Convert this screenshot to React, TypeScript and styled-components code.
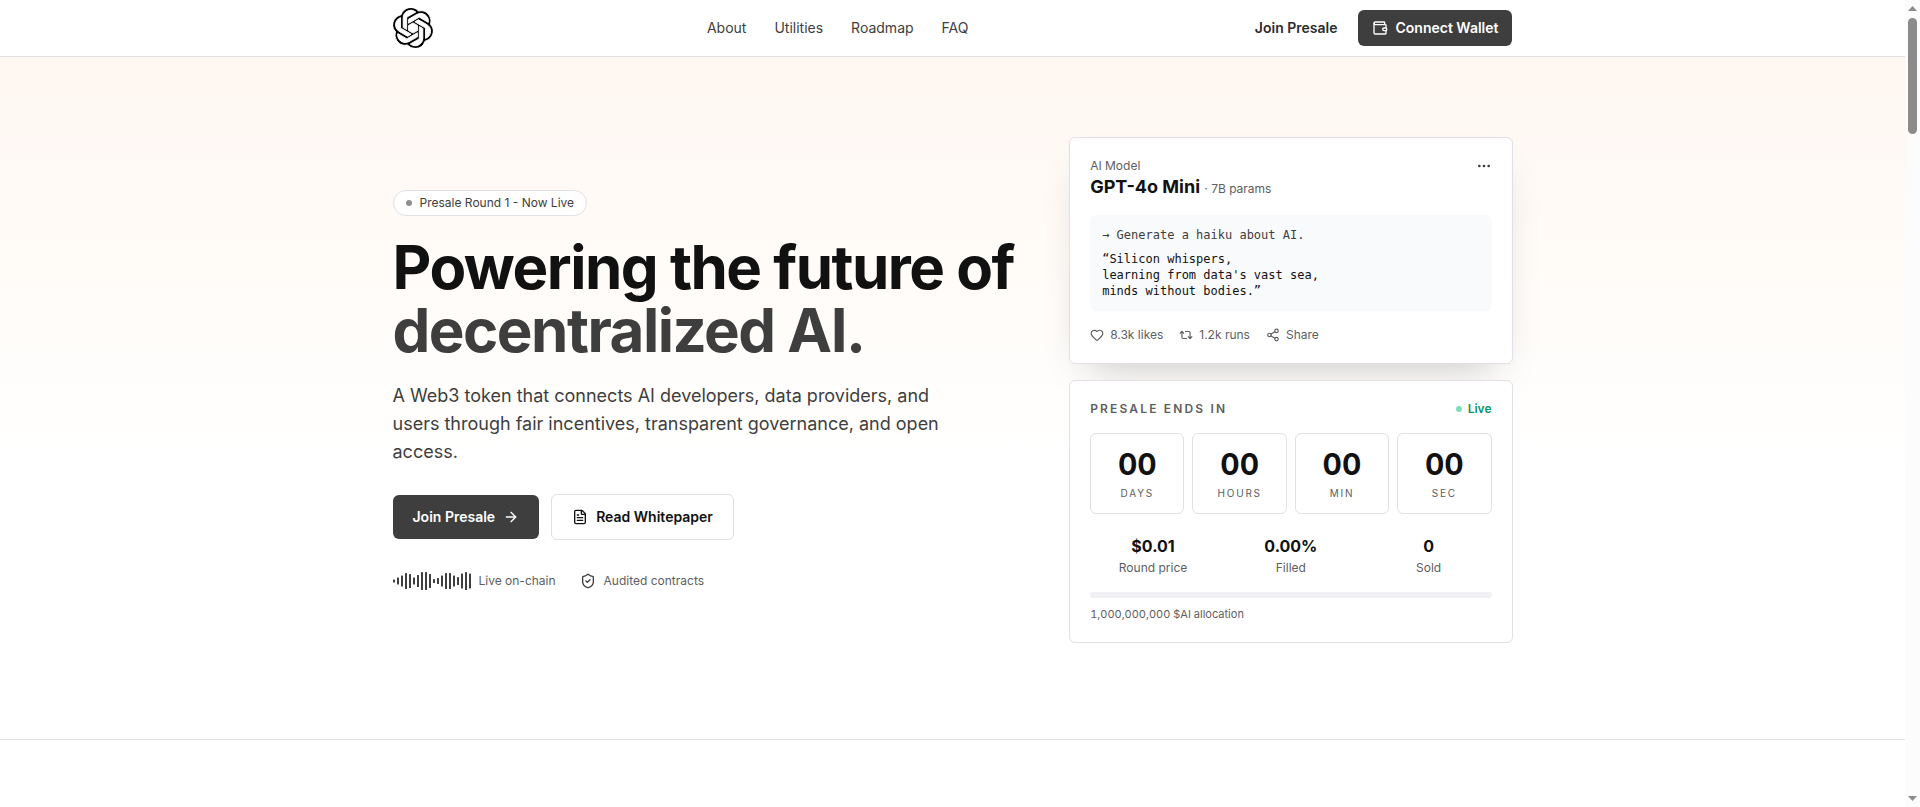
import React from 'react';
import styled, { createGlobalStyle } from 'styled-components';
import { ArrowRight, FileText, Heart, MoreHorizontal, Repeat2, Share2, ShieldCheck, Wallet } from 'lucide-react';
import { SiOpenai } from 'react-icons/si';

const GlobalStyle = createGlobalStyle`
  *, *::before, *::after { box-sizing: border-box; }
  body {
    margin: 0;
    background: #fff;
    color: #111;
    font-family: Inter, "Liberation Sans", sans-serif;
    font-size: 16px;
    line-height: 24px;
  }
  h1, h2, p, dl, dd, dt { margin: 0; }
  button { font: inherit; color: inherit; cursor: pointer; }
  a { color: inherit; text-decoration: none; }
  svg { display: block; flex-shrink: 0; }
`;

const Page = styled.div`
  height: 100vh;
  overflow: hidden;
  padding-right: 15px;
`;

const Container = styled.div`
  width: 100%;
  max-width: 1120px;
  margin: 0 auto;
`;

const Header = styled.header`
  border-bottom: 1px solid #e0e0e6;
  background: #fff;
`;

const HeaderRow = styled(Container)`
  display: flex;
  align-items: center;
  justify-content: space-between;
  height: 56px;
`;

const Nav = styled.nav`
  display: flex;
  gap: 28px;
  font-size: 14px;
  line-height: 20px;
  color: #3e3e3e;
`;

const HeaderActions = styled.div`
  display: flex;
  align-items: center;
  gap: 8px;
  font-size: 14px;
  line-height: 20px;
  font-weight: 600;
`;

const TextLink = styled.a`
  padding: 8px 12px;
  color: #2c2c2c;
`;

const WalletButton = styled.button`
  display: flex;
  align-items: center;
  gap: 8px;
  height: 36px;
  padding: 0 14px;
  border: 0;
  border-radius: 6px;
  background: #3e3e3e;
  color: #fff;
`;

const Hero = styled.section`
  padding: 80px 0 96px;
  border-bottom: 1px solid #e0e0e0;
  background: linear-gradient(to bottom, #fff7f1, #fffcf9 35%, #fff 60%);
`;

const HeroGrid = styled(Container)`
  display: grid;
  grid-template-columns: repeat(12, minmax(0, 1fr));
  column-gap: 40px;
  align-items: center;
`;

const Intro = styled.div`
  grid-column: span 7;
`;

const Badge = styled.span`
  display: flex;
  width: fit-content;
  align-items: center;
  gap: 8px;
  padding: 4px 12px;
  border: 1px solid #e0e0e6;
  border-radius: 13px;
  background: #fff;
  color: #3e3e3e;
  font-size: 12px;
  line-height: 16px;
`;

const Dot = styled.i<{ $color: string }>`
  width: 6px;
  height: 6px;
  border-radius: 50%;
  background: ${(p) => p.$color};
`;

const Title = styled.h1`
  margin-top: 20px;
  font-size: 60px;
  line-height: 63px;
  font-weight: 700;
  letter-spacing: -0.025em;
  color: #111;
`;

const TitleAccent = styled.span`
  display: block;
  color: #3e3e3e;
`;

const Lead = styled.p`
  max-width: 576px;
  margin-top: 20px;
  font-size: 18px;
  line-height: 28px;
  color: #3e3e3e;
`;

const CtaRow = styled.div`
  display: flex;
  align-items: center;
  gap: 12px;
  margin-top: 28px;
`;

const Cta = styled.a<{ $outlined?: boolean }>`
  display: flex;
  align-items: center;
  gap: 8px;
  padding: 12px 20px;
  border: ${(p) => (p.$outlined ? '1px solid #e0e0e0' : '0')};
  border-radius: 6px;
  background: ${(p) => (p.$outlined ? '#fff' : '#3e3e3e')};
  color: ${(p) => (p.$outlined ? '#111' : '#fff')};
  font-size: 14px;
  line-height: 20px;
  font-weight: 600;
`;

const TrustRow = styled.div`
  display: flex;
  align-items: center;
  gap: 24px;
  margin-top: 32px;
  font-size: 12px;
  line-height: 18px;
  color: #5d5e62;
`;

const TrustItem = styled.span`
  display: flex;
  align-items: center;
  gap: 8px;
`;

const Cards = styled.div`
  grid-column: span 5;
  display: grid;
  gap: 16px;
`;

const Card = styled.article<{ $raised?: boolean }>`
  padding: 20px;
  border: 1px solid #e0e0e6;
  border-radius: 6px;
  background: #fff;
  box-shadow: ${(p) => (p.$raised ? '0 20px 40px -20px rgba(0, 0, 0, 0.25)' : 'none')};
`;

const CardHead = styled.div`
  display: flex;
  align-items: flex-start;
  justify-content: space-between;
  margin-bottom: 16px;
  font-size: 12px;
  line-height: 16px;
  color: #5d5e62;
`;

const ModelName = styled.h2`
  font-size: 18px;
  line-height: 25px;
  font-weight: 700;
  color: #111;
`;

const ModelMeta = styled.small`
  font-size: 12px;
  line-height: 16px;
  font-weight: 400;
  color: #5d5e62;
`;

const IconButton = styled.button`
  display: block;
  padding: 0;
  border: 0;
  background: none;
`;

const Prompt = styled.div`
  display: grid;
  gap: 8px;
  padding: 12px;
  border-radius: 6px;
  background: #f9fafc;
  color: #3e3e3e;
  font-family: "DejaVu Sans Mono", monospace;
  font-size: 12px;
  line-height: 16px;
`;

const Answer = styled.p`
  color: #111;
  white-space: pre-line;
`;

const ActionRow = styled.div`
  display: flex;
  gap: 16px;
  margin-top: 16px;
  font-size: 12px;
  line-height: 16px;
  color: #5d5e62;
`;

const Action = styled(IconButton)`
  display: flex;
  align-items: center;
  gap: 6px;
`;

const SectionLabel = styled.h2`
  font-size: 12px;
  line-height: 16px;
  font-weight: 600;
  letter-spacing: 0.18em;
  text-transform: uppercase;
`;

const LiveTag = styled.span`
  display: flex;
  align-items: center;
  gap: 6px;
  font-weight: 600;
  color: #059669;
`;

const Countdown = styled.div`
  display: grid;
  grid-template-columns: repeat(4, 1fr);
  gap: 8px;
`;

const TimeCell = styled.div`
  padding: 12px;
  border: 1px solid #e0e0e6;
  border-radius: 6px;
  text-align: center;
`;

const TimeValue = styled.div`
  font-size: 30px;
  line-height: 36px;
  font-weight: 700;
  font-variant-numeric: tabular-nums;
`;

const TimeUnit = styled.div`
  margin-top: 4px;
  font-size: 10px;
  line-height: 15px;
  letter-spacing: 0.18em;
  text-transform: uppercase;
  color: #5d5e62;
`;

const Stats = styled.dl`
  display: grid;
  grid-template-columns: repeat(3, 1fr);
  gap: 12px;
  margin-top: 20px;
  text-align: center;
`;

const Stat = styled.div`
  display: flex;
  flex-direction: column-reverse;
  gap: 2px;
`;

const StatLabel = styled.dt`
  font-size: 12px;
  line-height: 16px;
  color: #5d5e62;
`;

const StatValue = styled.dd`
  font-weight: 700;
`;

const Progress = styled.div`
  height: 6px;
  margin-top: 16px;
  border-radius: 3px;
  background: #f0f0f5;
`;

const Allocation = styled.p`
  margin-top: 8px;
  font-size: 11px;
  line-height: 16px;
  font-variant-numeric: tabular-nums;
  color: #5d5e62;
`;

const ScrollTrack = styled.div`
  position: fixed;
  top: 0;
  right: 0;
  bottom: 0;
  display: flex;
  flex-direction: column;
  align-items: center;
  justify-content: space-between;
  width: 15px;
  padding: 6px 0;
  background: #fcfcfc;
`;

const ScrollTop = styled.div`
  display: grid;
  justify-items: center;
  gap: 7px;
`;

const ScrollThumb = styled.div`
  width: 9px;
  height: 116px;
  border-radius: 5px;
  background: #8b8b8b;
`;

const WAVE = [3, 7, 11, 16, 14, 7, 12, 18, 18, 14, 4, 6, 11, 16, 16, 11, 8, 15, 18, 15];

const Waveform = () => (
  <svg width="78" height="18" viewBox="0 0 78 18" aria-hidden="true">
    {WAVE.map((h, i) => (
      <rect key={i} x={i * 4} y={(18 - h) / 2} width="2" height={h} rx="0.5" fill="#3e3e3e" />
    ))}
  </svg>
);

const LINKS = ['About', 'Utilities', 'Roadmap', 'FAQ'];
const UNITS = ['Days', 'Hours', 'Min', 'Sec'];
const STATS = [
  { label: 'Round price', value: '$0.01' },
  { label: 'Filled', value: '0.00%' },
  { label: 'Sold', value: '0' },
];

export default function App() {
  return (
    <>
      <GlobalStyle />
      <Page>
        <Header>
          <HeaderRow>
            <a href="#top" aria-label="Home">
              {/* The white outline thins the mark's strokes */}
              <SiOpenai size={40} color="#000" stroke="#fff" strokeWidth="0.56" viewBox="0.28 0.28 23.44 23.44" />
            </a>
            <Nav>
              {LINKS.map((l) => (
                <a key={l} href={`#${l.toLowerCase()}`}>{l}</a>
              ))}
            </Nav>
            <HeaderActions>
              <TextLink href="#presale">Join Presale</TextLink>
              <WalletButton type="button">
                <Wallet size={16} />
                Connect Wallet
              </WalletButton>
            </HeaderActions>
          </HeaderRow>
        </Header>
        <Hero>
          <HeroGrid>
            <Intro>
              <Badge>
                <Dot $color="#8f8f8f" />
                Presale Round 1 - Now Live
              </Badge>
              <Title>
                Powering the future of <TitleAccent>decentralized AI.</TitleAccent>
              </Title>
              <Lead>
                A Web3 token that connects AI developers, data providers, and users through fair
                incentives, transparent governance, and open access.
              </Lead>
              <CtaRow>
                <Cta href="#presale">
                  Join Presale
                  <ArrowRight size={16} />
                </Cta>
                <Cta href="#whitepaper" $outlined>
                  <FileText size={16} />
                  Read Whitepaper
                </Cta>
              </CtaRow>
              <TrustRow>
                <TrustItem>
                  <Waveform />
                  Live on-chain
                </TrustItem>
                <TrustItem>
                  <ShieldCheck size={16} color="#3e3e3e" />
                  Audited contracts
                </TrustItem>
              </TrustRow>
            </Intro>
            <Cards>
              <Card $raised>
                <CardHead>
                  <div>
                    <div>AI Model</div>
                    <ModelName>
                      GPT-4o Mini <ModelMeta>· 7B params</ModelMeta>
                    </ModelName>
                  </div>
                  <IconButton type="button" aria-label="More options">
                    <MoreHorizontal size={16} color="#3e3e3e" />
                  </IconButton>
                </CardHead>
                <Prompt>
                  <p>→ Generate a haiku about AI.</p>
                  <Answer>{"“Silicon whispers,\nlearning from data's vast sea,\nminds without bodies.”"}</Answer>
                </Prompt>
                <ActionRow>
                  <Action type="button"><Heart size={14} />8.3k likes</Action>
                  <Action type="button"><Repeat2 size={14} />1.2k runs</Action>
                  <Action type="button"><Share2 size={14} />Share</Action>
                </ActionRow>
              </Card>
              <Card>
                <CardHead>
                  <SectionLabel>Presale ends in</SectionLabel>
                  <LiveTag><Dot $color="#7fdcbc" />Live</LiveTag>
                </CardHead>
                <Countdown>
                  {UNITS.map((u) => (
                    <TimeCell key={u}>
                      <TimeValue>00</TimeValue>
                      <TimeUnit>{u}</TimeUnit>
                    </TimeCell>
                  ))}
                </Countdown>
                <Stats>
                  {STATS.map((s) => (
                    <Stat key={s.label}>
                      <StatLabel>{s.label}</StatLabel>
                      <StatValue>{s.value}</StatValue>
                    </Stat>
                  ))}
                </Stats>
                <Progress role="progressbar" aria-label="Filled" aria-valuenow={0} aria-valuemin={0} aria-valuemax={100} />
                <Allocation>1,000,000,000 $AI allocation</Allocation>
              </Card>
            </Cards>
          </HeroGrid>
        </Hero>
      </Page>
      <ScrollTrack aria-hidden="true">
        <ScrollTop>
          <svg width="9" height="5" viewBox="0 0 9 5"><path d="M0 5L4.500 0L9 5Z" fill="#8b8b8b" /></svg>
          <ScrollThumb />
        </ScrollTop>
        <svg width="9" height="5" viewBox="0 0 9 5"><path d="M0 0L4.500 5L9 0Z" fill="#8b8b8b" /></svg>
      </ScrollTrack>
    </>
  );
}
